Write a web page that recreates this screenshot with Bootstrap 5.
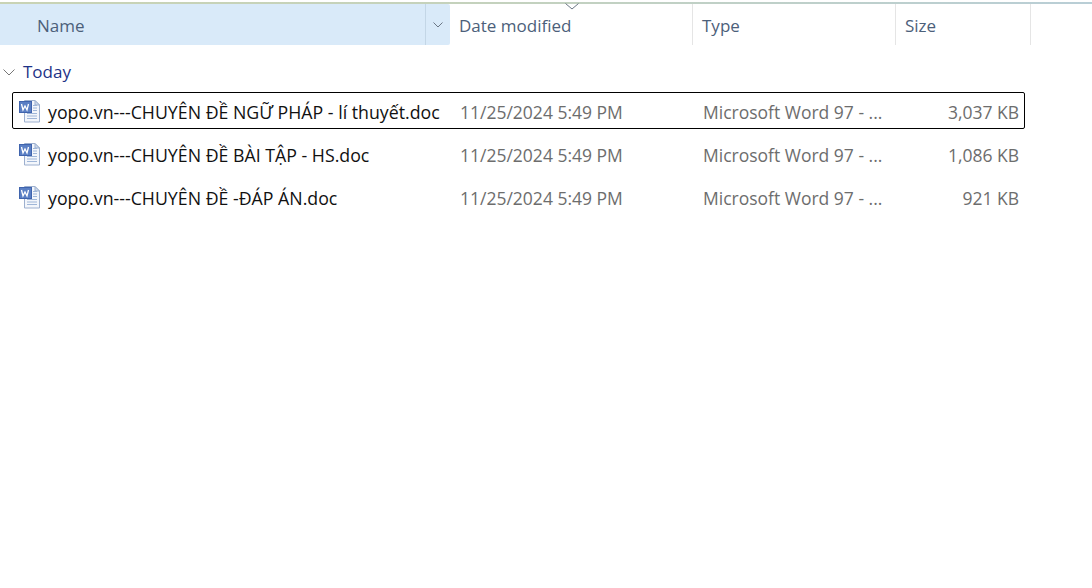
<!DOCTYPE html>
<html lang="vi">
<head>
    <meta charset="UTF-8">
    <title>Explorer</title>
    <link href="https://cdn.jsdelivr.net/npm/bootstrap@5.3.0/dist/css/bootstrap.min.css" rel="stylesheet">
    <style>
        body { font-family: "Open Sans", "Noto Sans", sans-serif; font-size: 17px; background: #fff; overflow: hidden; }
        .top-line { height: 2px; margin-top: 2px; background: linear-gradient(90deg, #c9d3b4 0, #c5d2bb 40%, #b9ced6 100%); }
        .head-row { height: 41px; color: #4c607a; }
        .head-name > span, .head-col { padding-top: 2px; }
        .head-name { width: 450px; background: #d9eaf9; border-radius: 0 2px 2px 0; padding-left: 37px; }
        .head-arrow { width: 25px; border-left: 1px solid #c3d6e6; }
        .head-col { border-right: 1px solid #e5e5e5; padding-left: 9px; position: relative; }
        .col-date { width: 243px; }
        .col-type { width: 203px; }
        .col-size { width: 135px; }
        .sort-mark { position: absolute; left: 115px; top: -1px; }
        .group-title { color: #1e3287; height: 24px; margin-top: 15px; padding-left: 3px; }
        .file-list { margin-top: 8px; margin-left: 12px; width: 1013px; gap: 6px; font-size: 17.5px; }
        .file-row { height: 37px; border: 1px solid transparent; border-radius: 2px; padding-left: 5px; color: #6d6d6d; }
        .file-row.is-focus { border-color: #000; }
        .file-name { width: 442px; color: #111; gap: 6px; white-space: nowrap; font-size: 17.75px; }
        .file-name span, .file-date, .file-type, .file-size { padding-top: 4px; }
        .file-date { width: 243px; }
        .file-type { width: 190px; }
        .file-size { width: 131px; text-align: right; padding-right: 5px; }
    </style>
</head>
<body>
<svg width="0" height="0" class="position-absolute">
    <symbol id="word-doc" viewBox="0 0 24 24">
        <path d="M6.500 1.500H17l4.500 4.500v17h-15z" fill="#f3f6fb" stroke="#9db0cf"/>
        <path d="M17 1.500V6h4.500z" fill="#cfdcee" stroke="#9db0cf"/>
        <path d="M15 6.500h4M15 9h4M15 11.500h4M9 14.500h10M9 17h10M9 19.500h10" stroke="#9fb6d8"/>
        <rect x="1.500" y="2.500" width="12" height="11" fill="#5a7fc4" stroke="#4064ad"/>
        <path d="M3.500 5l1.500 6 2-4 2 4 1.500-6" fill="none" stroke="#fff" stroke-width="1.300"/>
    </symbol>
</svg>

<div class="top-line"></div>
<div class="head-row d-flex">
    <div class="head-name d-flex align-items-center justify-content-between pe-0">
        <span>Name</span>
        <div class="head-arrow h-100 d-flex align-items-center justify-content-center">
            <svg width="10" height="6" viewBox="0 0 10 6"><path d="M.5.500 5 5 9.500.500" fill="none" stroke="#6b7785"/></svg>
        </div>
    </div>
    <div class="head-col col-date d-flex align-items-center">
        <svg class="sort-mark" width="14" height="7" viewBox="0 0 14 7"><path d="M.5.500 7 6 13.500.500" fill="none" stroke="#6b7785"/></svg>
        <span>Date modified</span>
    </div>
    <div class="head-col col-type d-flex align-items-center">Type</div>
    <div class="head-col col-size d-flex align-items-center">Size</div>
</div>

<div class="group-title d-flex align-items-center gap-2">
    <svg width="12" height="7" viewBox="0 0 12 7"><path d="M.5.500 6 6 11.500.500" fill="none" stroke="#777"/></svg>
    <span>Today</span>
</div>

<div class="file-list d-flex flex-column">
    <div class="file-row is-focus d-flex align-items-center">
        <div class="file-name d-flex align-items-center"><svg width="24" height="24"><use href="#word-doc"/></svg><span>yopo.vn---CHUYÊN ĐỀ NGỮ PHÁP - lí thuyết.doc</span></div>
        <div class="file-date">11/25/2024 5:49 PM</div>
        <div class="file-type">Microsoft Word 97 - ...</div>
        <div class="file-size">3,037 KB</div>
    </div>
    <div class="file-row d-flex align-items-center">
        <div class="file-name d-flex align-items-center"><svg width="24" height="24"><use href="#word-doc"/></svg><span>yopo.vn---CHUYÊN ĐỀ BÀI TẬP - HS.doc</span></div>
        <div class="file-date">11/25/2024 5:49 PM</div>
        <div class="file-type">Microsoft Word 97 - ...</div>
        <div class="file-size">1,086 KB</div>
    </div>
    <div class="file-row d-flex align-items-center">
        <div class="file-name d-flex align-items-center"><svg width="24" height="24"><use href="#word-doc"/></svg><span>yopo.vn---CHUYÊN ĐỀ -ĐÁP ÁN.doc</span></div>
        <div class="file-date">11/25/2024 5:49 PM</div>
        <div class="file-type">Microsoft Word 97 - ...</div>
        <div class="file-size">921 KB</div>
    </div>
</div>
<script src="https://cdn.jsdelivr.net/npm/bootstrap@5.3.0/dist/js/bootstrap.bundle.min.js"></script>
</body>
</html>
